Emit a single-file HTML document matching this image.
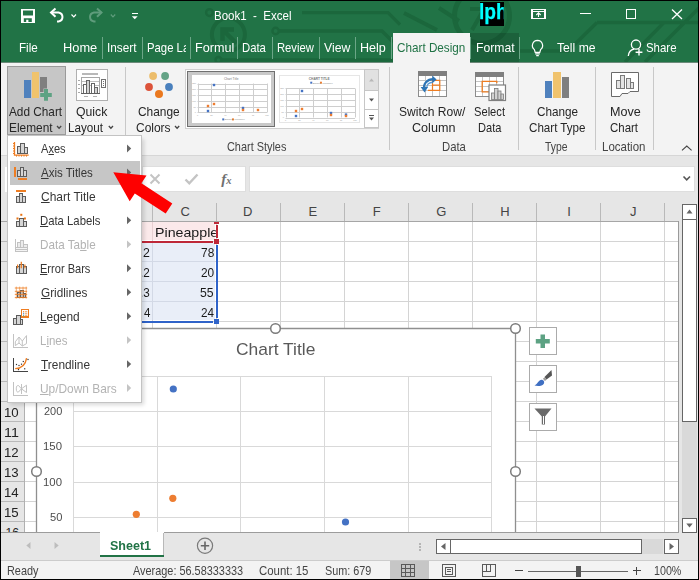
<!DOCTYPE html>
<html lang="en"><head><meta charset="utf-8"><title>Book1 - Excel</title>
<style>
html,body{margin:0;padding:0;background:#000;overflow:hidden}
#app{position:relative;width:699px;height:580px;overflow:hidden;background:#000;font-family:"Liberation Sans", sans-serif}
.t{position:absolute;white-space:pre;line-height:20px;transform-origin:0 0;font-family:"Liberation Sans", sans-serif;}
.t u{text-decoration:underline;text-underline-offset:1px;text-decoration-thickness:1px}
svg{position:absolute;left:0;top:0}
svg text{font-family:"Liberation Sans",sans-serif}
</style></head><body>
<div id="app">
<svg width="699" height="580" viewBox="0 0 699 580">
<rect x="1" y="1" width="697" height="61.6" fill="#217346" />
<clipPath id="tclip"><rect x="1" y="1" width="697" height="61"/></clipPath><g clip-path="url(#tclip)" fill="none" stroke="#1b673c" stroke-width="3.6" stroke-linecap="butt"><circle cx="228.4" cy="34.5" r="16.5" stroke-width="4"/><path d="M236.5 43.5 L224 31 M222.5 41 V29.5 H234" stroke-width="4.4"/><circle cx="209.5" cy="12.6" r="3.4" stroke-width="2.4"/><circle cx="275.6" cy="31" r="3.2" stroke-width="2.4"/><path d="M279 31 H382 L393 42 M302 12.6 H388 L400 24.6" stroke-width="3.4"/><circle cx="218.5" cy="60" r="3" stroke-width="2.4"/><path d="M222 60 H400" stroke-width="3.4"/><circle cx="482" cy="16" r="27.5" stroke-width="5"/><path d="M470 9 H484 L472 30 M404 13 L437 30 M439 8 L459 21" stroke-width="4"/><path d="M597 22.5 H699 M597 22.5 L568 51 H520 M664 22.5 L625 62 M699 8 L645 62" stroke-width="3.4"/></g>
<path d="M21 9 H35 V23 H21 Z M23 10.4 V15.6 H33 V10.4 Z M23.8 18.2 V22 H26.2 V19.8 H28.4 V22 H31.8 V18.2 Z" fill="#ffffff" fill-rule="evenodd"/>
<path d="M51 12.5 H58.5 A5 4.6 0 0 1 58.5 21.5 H57" fill="none" stroke="#ffffff" stroke-width="2" stroke-linecap="butt"/>
<path d="M55.5 8.5 L51 12.5 L55.5 16.8" fill="none" stroke="#ffffff" stroke-width="2" stroke-linejoin="miter"/>
<path d="M71.5 14.5 L73.8 16.8 L76 14.5" fill="none" stroke="#ffffff" stroke-width="1.2" />
<path d="M101.5 12.5 H94 A5 4.6 0 0 0 94 21.5 H95.5" fill="none" stroke="#5f9c7c" stroke-width="2" />
<path d="M97 8.5 L101.5 12.5 L97 16.8" fill="none" stroke="#5f9c7c" stroke-width="2" />
<path d="M110.8 14.5 L113 16.8 L115.2 14.5" fill="none" stroke="#5f9c7c" stroke-width="1.2" />
<rect x="132" y="13" width="5.5" height="1.3" fill="#ffffff" shape-rendering="crispEdges"/>
<path d="M131.8 16.2 H137.7 L134.75 19.2 Z" fill="#ffffff" />
<rect x="480" y="2" width="24" height="24" fill="#000" shape-rendering="crispEdges"/>
<path d="M532 9.5 H545 V18.5 H532 Z M532 11.5 H545" fill="none" stroke="#ffffff" stroke-width="1.1" shape-rendering="crispEdges"/>
<path d="M538.5 17 V13 M536.3 15 L538.5 12.8 L540.7 15" fill="none" stroke="#ffffff" stroke-width="1.1" />
<line x1="579.5" y1="13.5" x2="590.5" y2="13.5" stroke="#ffffff" stroke-width="1.2" shape-rendering="crispEdges"/>
<rect x="626.5" y="9.5" width="9" height="9" fill="none" stroke="#ffffff" stroke-width="1" shape-rendering="crispEdges"/>
<path d="M672 9.5 L682 19 M682 9.5 L672 19" fill="none" stroke="#ffffff" stroke-width="1.3" />
<line x1="102.5" y1="37" x2="102.5" y2="59" stroke="#6ba687" stroke-width="1" shape-rendering="crispEdges"/>
<line x1="142.5" y1="37" x2="142.5" y2="59" stroke="#6ba687" stroke-width="1" shape-rendering="crispEdges"/>
<line x1="190.5" y1="37" x2="190.5" y2="59" stroke="#6ba687" stroke-width="1" shape-rendering="crispEdges"/>
<line x1="237.5" y1="37" x2="237.5" y2="59" stroke="#6ba687" stroke-width="1" shape-rendering="crispEdges"/>
<line x1="272.5" y1="37" x2="272.5" y2="59" stroke="#6ba687" stroke-width="1" shape-rendering="crispEdges"/>
<line x1="319.5" y1="37" x2="319.5" y2="59" stroke="#6ba687" stroke-width="1" shape-rendering="crispEdges"/>
<line x1="355.5" y1="37" x2="355.5" y2="59" stroke="#6ba687" stroke-width="1" shape-rendering="crispEdges"/>
<line x1="391.5" y1="37" x2="391.5" y2="59" stroke="#6ba687" stroke-width="1" shape-rendering="crispEdges"/>
<line x1="519.5" y1="37" x2="519.5" y2="59" stroke="#6ba687" stroke-width="1" shape-rendering="crispEdges"/>
<rect x="393" y="33" width="77" height="30" fill="#f3f3f3" shape-rendering="crispEdges"/>
<rect x="470" y="33" width="49" height="29.6" fill="#000" opacity="0.15"/>
<line x1="470.5" y1="37" x2="470.5" y2="59" stroke="#6ba687" stroke-width="1" shape-rendering="crispEdges"/>
<path d="M537.5 40.3 A5.2 5.2 0 0 1 540.6 49.6 L539.8 52.4 H535.2 L534.4 49.6 A5.2 5.2 0 0 1 537.5 40.3 Z M535.2 53.9 H539.8 M536.2 55.7 H538.8" fill="none" stroke="#ffffff" stroke-width="1.2" />
<circle cx="636" cy="44.6" r="4.6" fill="none" stroke="#ffffff" stroke-width="1.3" />
<path d="M628.3 56 C628.8 51.5 631.5 49.6 634 49.2" fill="none" stroke="#ffffff" stroke-width="1.3" />
<path d="M639 48.8 V55.6 M635.6 52.2 H642.4" fill="none" stroke="#ffffff" stroke-width="1.4" />
<rect x="1" y="62.6" width="697" height="92.4" fill="#f3f3f3" />
<rect x="1" y="155" width="697" height="1" fill="#d6d6d6" shape-rendering="crispEdges"/>
<rect x="7.5" y="66.5" width="58" height="68" fill="#c6c6c6" stroke="#9a9a9a" stroke-width="1" shape-rendering="crispEdges"/>
<rect x="24" y="80" width="7" height="18" fill="#4f81bd" shape-rendering="crispEdges"/>
<rect x="32" y="72" width="7" height="26" fill="#f0c36d" shape-rendering="crispEdges"/>
<rect x="40" y="77" width="7" height="15" fill="#7f7f7f" shape-rendering="crispEdges"/>
<path d="M43.5 88.5 H48.5 V92.5 H52.3 V97.5 H48.5 V101.3 H43.5 V97.5 H39.7 V92.5 H43.5 Z" fill="#c6c6c6" />
<path d="M44 89 H48 V93 H51.8 V97 H48 V100.8 H44 V97 H40.2 V93 H44 Z" fill="#5da283" />
<path d="M57 126 L59.1 128.2 L61.2 126" fill="none" stroke="#444" stroke-width="1.3" />
<rect x="76.5" y="69.5" width="31" height="31" fill="#fff" stroke="#b0b0b0" stroke-width="1" shape-rendering="crispEdges"/>
<rect x="82" y="73" width="16" height="2" fill="#b8b8b8" shape-rendering="crispEdges"/>
<rect x="81.5" y="77.5" width="18" height="16" fill="#fff" stroke="#a8a8a8" stroke-width="1" shape-rendering="crispEdges"/>
<line x1="82" y1="81.5" x2="99" y2="81.5" stroke="#c0c0c0" stroke-width="1" shape-rendering="crispEdges"/>
<line x1="82" y1="85.5" x2="99" y2="85.5" stroke="#c0c0c0" stroke-width="1" shape-rendering="crispEdges"/>
<line x1="78" y1="80.5" x2="80" y2="80.5" stroke="#a8a8a8" stroke-width="1" shape-rendering="crispEdges"/>
<line x1="78" y1="84.5" x2="80" y2="84.5" stroke="#a8a8a8" stroke-width="1" shape-rendering="crispEdges"/>
<line x1="78" y1="88.5" x2="80" y2="88.5" stroke="#a8a8a8" stroke-width="1" shape-rendering="crispEdges"/>
<line x1="78" y1="92.5" x2="80" y2="92.5" stroke="#a8a8a8" stroke-width="1" shape-rendering="crispEdges"/>
<rect x="83.5" y="84.5" width="3" height="9.0" fill="#fff" stroke="#666" stroke-width="1" shape-rendering="crispEdges"/>
<rect x="86.5" y="80.5" width="3" height="13.0" fill="#d4d4d4" stroke="#666" stroke-width="1" shape-rendering="crispEdges"/>
<rect x="91.5" y="83.5" width="3" height="10.0" fill="#fff" stroke="#666" stroke-width="1" shape-rendering="crispEdges"/>
<rect x="94.5" y="87.5" width="3" height="6.0" fill="#d4d4d4" stroke="#666" stroke-width="1" shape-rendering="crispEdges"/>
<line x1="81" y1="93.5" x2="100" y2="93.5" stroke="#606060" stroke-width="1.4" shape-rendering="crispEdges"/>
<rect x="101.5" y="79.5" width="4" height="8" fill="#fff" stroke="#707070" stroke-width="1" shape-rendering="crispEdges"/>
<rect x="103" y="81.0" width="1" height="1" fill="#707070" shape-rendering="crispEdges"/>
<rect x="103" y="83.1" width="1" height="1" fill="#707070" shape-rendering="crispEdges"/>
<rect x="103" y="85.2" width="1" height="1" fill="#707070" shape-rendering="crispEdges"/>
<line x1="84" y1="96.5" x2="88" y2="96.5" stroke="#b0b0b0" stroke-width="1" shape-rendering="crispEdges"/>
<line x1="93" y1="96.5" x2="97" y2="96.5" stroke="#b0b0b0" stroke-width="1" shape-rendering="crispEdges"/>
<path d="M108.8 126 L110.9 128.2 L113 126" fill="none" stroke="#444" stroke-width="1.3" />
<line x1="125.5" y1="67" x2="125.5" y2="150" stroke="#c8c8c8" stroke-width="1" shape-rendering="crispEdges"/>
<circle cx="153.1" cy="76" r="3.9" fill="#ecbd6b" />
<circle cx="165.1" cy="76" r="3.9" fill="#64a386" />
<circle cx="149" cy="87" r="3.9" fill="#dc533a" />
<circle cx="169" cy="87" r="3.9" fill="#4a80bd" />
<circle cx="159" cy="93.9" r="4" fill="#ea781e" />
<path d="M175 126 L177.1 128.2 L179.2 126" fill="none" stroke="#444" stroke-width="1.3" />
<rect x="185.5" y="69.5" width="193" height="59" fill="#fff" stroke="#d0d0d0" stroke-width="1" shape-rendering="crispEdges"/>
<rect x="187.5" y="71.5" width="87" height="55" fill="#c9c9c9" stroke="#707070" stroke-width="1" shape-rendering="crispEdges"/>
<rect x="191.5" y="75" width="79.5" height="48" fill="#fff" shape-rendering="crispEdges"/>
<line x1="197.5" y1="84.5" x2="267" y2="84.5" stroke="#cecece" stroke-width="1" />
<line x1="197.5" y1="89.5" x2="267" y2="89.5" stroke="#cecece" stroke-width="1" />
<line x1="197.5" y1="95.5" x2="267" y2="95.5" stroke="#cecece" stroke-width="1" />
<line x1="197.5" y1="101.5" x2="267" y2="101.5" stroke="#cecece" stroke-width="1" />
<line x1="197.5" y1="107.5" x2="267" y2="107.5" stroke="#cecece" stroke-width="1" />
<line x1="197.5" y1="112.5" x2="267" y2="112.5" stroke="#cecece" stroke-width="1" />
<line x1="198.5" y1="83.5" x2="198.5" y2="112.5" stroke="#cecece" stroke-width="1" />
<line x1="211.5" y1="83.5" x2="211.5" y2="112.5" stroke="#cecece" stroke-width="1" />
<line x1="225.5" y1="83.5" x2="225.5" y2="112.5" stroke="#cecece" stroke-width="1" />
<line x1="239.5" y1="83.5" x2="239.5" y2="112.5" stroke="#cecece" stroke-width="1" />
<line x1="253.5" y1="83.5" x2="253.5" y2="112.5" stroke="#cecece" stroke-width="1" />
<line x1="267.5" y1="83.5" x2="267.5" y2="112.5" stroke="#cecece" stroke-width="1" />
<rect x="212.8" y="83.8" width="2.4" height="2.4" fill="#4472c4" />
<rect x="206.8" y="104.8" width="2.4" height="2.4" fill="#ed7d31" />
<rect x="212.8" y="102.8" width="2.4" height="2.4" fill="#ed7d31" />
<rect x="206.8" y="109.8" width="2.4" height="2.4" fill="#4472c4" />
<rect x="241.8" y="106.8" width="2.4" height="2.4" fill="#4472c4" />
<rect x="241.8" y="108.8" width="2.4" height="2.4" fill="#ed7d31" />
<rect x="256.8" y="108.8" width="2.4" height="2.4" fill="#ed7d31" />
<text x="231.25" y="80" font-size="3.2" fill="#777" text-anchor="middle">Chart Title</text>
<rect x="222.25" y="118.4" width="2" height="2" fill="#4472c4" />
<rect x="231.95" y="118.4" width="2" height="2" fill="#ed7d31" />
<text x="224.75" y="120.2" font-size="2.3" fill="#8a8a8a">Banana</text>
<text x="234.45" y="120.2" font-size="2.3" fill="#8a8a8a">Pineapple</text>
<text x="196.0" y="84.4" font-size="2.2" fill="#999" text-anchor="end">250</text>
<text x="196.0" y="90.2" font-size="2.2" fill="#999" text-anchor="end">200</text>
<text x="196.0" y="96.0" font-size="2.2" fill="#999" text-anchor="end">150</text>
<text x="196.0" y="101.8" font-size="2.2" fill="#999" text-anchor="end">100</text>
<text x="196.0" y="107.6" font-size="2.2" fill="#999" text-anchor="end">50</text>
<text x="196.0" y="113.4" font-size="2.2" fill="#999" text-anchor="end">0</text>
<text x="197.5" y="115.8" font-size="2.2" fill="#999" text-anchor="middle">0</text>
<text x="211.4" y="115.8" font-size="2.2" fill="#999" text-anchor="middle">20</text>
<text x="225.3" y="115.8" font-size="2.2" fill="#999" text-anchor="middle">40</text>
<text x="239.2" y="115.8" font-size="2.2" fill="#999" text-anchor="middle">60</text>
<text x="253.1" y="115.8" font-size="2.2" fill="#999" text-anchor="middle">80</text>
<text x="267.0" y="115.8" font-size="2.2" fill="#999" text-anchor="middle">100</text>
<rect x="279.5" y="75" width="79.5" height="47.5" fill="#fff" stroke="#e6e6e6" stroke-width="1" shape-rendering="crispEdges"/>
<line x1="285.5" y1="88.5" x2="355" y2="88.5" stroke="#cecece" stroke-width="1" />
<line x1="285.5" y1="94.5" x2="355" y2="94.5" stroke="#cecece" stroke-width="1" />
<line x1="285.5" y1="100.5" x2="355" y2="100.5" stroke="#cecece" stroke-width="1" />
<line x1="285.5" y1="106.5" x2="355" y2="106.5" stroke="#cecece" stroke-width="1" />
<line x1="285.5" y1="112.5" x2="355" y2="112.5" stroke="#cecece" stroke-width="1" />
<line x1="285.5" y1="118.5" x2="355" y2="118.5" stroke="#cecece" stroke-width="1" />
<line x1="286.5" y1="88.5" x2="286.5" y2="117.5" stroke="#cecece" stroke-width="1" />
<line x1="299.5" y1="88.5" x2="299.5" y2="117.5" stroke="#cecece" stroke-width="1" />
<line x1="313.5" y1="88.5" x2="313.5" y2="117.5" stroke="#cecece" stroke-width="1" />
<line x1="327.5" y1="88.5" x2="327.5" y2="117.5" stroke="#cecece" stroke-width="1" />
<line x1="341.5" y1="88.5" x2="341.5" y2="117.5" stroke="#cecece" stroke-width="1" />
<line x1="355.5" y1="88.5" x2="355.5" y2="117.5" stroke="#cecece" stroke-width="1" />
<rect x="300.8" y="89.8" width="2.4" height="2.4" fill="#4472c4" />
<rect x="294.8" y="109.8" width="2.4" height="2.4" fill="#ed7d31" />
<rect x="300.8" y="107.8" width="2.4" height="2.4" fill="#ed7d31" />
<rect x="294.8" y="114.8" width="2.4" height="2.4" fill="#4472c4" />
<rect x="329.8" y="111.8" width="2.4" height="2.4" fill="#4472c4" />
<rect x="329.8" y="113.8" width="2.4" height="2.4" fill="#ed7d31" />
<rect x="344.8" y="113.39999999999999" width="2.4" height="2.4" fill="#4472c4" />
<rect x="344.8" y="114.8" width="2.4" height="2.4" fill="#ed7d31" />
<text x="319.25" y="79.7" font-size="3.2" fill="#777" text-anchor="middle" font-weight="700">CHART TITLE</text>
<rect x="310.25" y="81.7" width="2" height="2" fill="#4472c4" />
<rect x="319.95" y="81.7" width="2" height="2" fill="#ed7d31" />
<text x="312.75" y="83.5" font-size="2.3" fill="#8a8a8a">Banana</text>
<text x="322.45" y="83.5" font-size="2.3" fill="#8a8a8a">Pineapple</text>
<text x="284.0" y="89.4" font-size="2.2" fill="#999" text-anchor="end">250</text>
<text x="284.0" y="95.2" font-size="2.2" fill="#999" text-anchor="end">200</text>
<text x="284.0" y="101.0" font-size="2.2" fill="#999" text-anchor="end">150</text>
<text x="284.0" y="106.8" font-size="2.2" fill="#999" text-anchor="end">100</text>
<text x="284.0" y="112.6" font-size="2.2" fill="#999" text-anchor="end">50</text>
<text x="284.0" y="118.4" font-size="2.2" fill="#999" text-anchor="end">0</text>
<text x="285.5" y="120.8" font-size="2.2" fill="#999" text-anchor="middle">0</text>
<text x="299.4" y="120.8" font-size="2.2" fill="#999" text-anchor="middle">20</text>
<text x="313.3" y="120.8" font-size="2.2" fill="#999" text-anchor="middle">40</text>
<text x="327.2" y="120.8" font-size="2.2" fill="#999" text-anchor="middle">60</text>
<text x="341.1" y="120.8" font-size="2.2" fill="#999" text-anchor="middle">80</text>
<text x="355.0" y="120.8" font-size="2.2" fill="#999" text-anchor="middle">100</text>
<rect x="364.5" y="69.5" width="14" height="58" fill="#fff" stroke="#c6c6c6" stroke-width="1" shape-rendering="crispEdges"/>
<rect x="365" y="70" width="13" height="20" fill="#e1e1e1" shape-rendering="crispEdges"/>
<line x1="364.5" y1="90.5" x2="378.5" y2="90.5" stroke="#c6c6c6" stroke-width="1" shape-rendering="crispEdges"/>
<line x1="364.5" y1="109.5" x2="378.5" y2="109.5" stroke="#c6c6c6" stroke-width="1" shape-rendering="crispEdges"/>
<path d="M369 81.5 L371.5 78.5 L374 81.5 Z" fill="#b8b8b8" />
<path d="M369 98.5 L371.5 101.5 L374 98.5 Z" fill="#555" />
<line x1="369" y1="115.5" x2="374" y2="115.5" stroke="#555" stroke-width="1" shape-rendering="crispEdges"/>
<path d="M369 117.5 L371.5 120.5 L374 117.5 Z" fill="#555" />
<line x1="389.5" y1="67" x2="389.5" y2="150" stroke="#c8c8c8" stroke-width="1" shape-rendering="crispEdges"/>
<rect x="418.5" y="71" width="28" height="25" fill="#fff" stroke="#8c8c8c" stroke-width="1" shape-rendering="crispEdges"/>
<rect x="418.5" y="71" width="28" height="4.5" fill="#7f7f7f" stroke="#7f7f7f" stroke-width="1" shape-rendering="crispEdges"/>
<line x1="419" y1="80.5" x2="446" y2="80.5" stroke="#c4c4c4" stroke-width="1" shape-rendering="crispEdges"/>
<line x1="419" y1="85.5" x2="446" y2="85.5" stroke="#c4c4c4" stroke-width="1" shape-rendering="crispEdges"/>
<line x1="419" y1="90.5" x2="446" y2="90.5" stroke="#c4c4c4" stroke-width="1" shape-rendering="crispEdges"/>
<line x1="425.5" y1="76" x2="425.5" y2="96" stroke="#c4c4c4" stroke-width="1" shape-rendering="crispEdges"/>
<line x1="432.5" y1="76" x2="432.5" y2="96" stroke="#c4c4c4" stroke-width="1" shape-rendering="crispEdges"/>
<line x1="439.5" y1="76" x2="439.5" y2="96" stroke="#c4c4c4" stroke-width="1" shape-rendering="crispEdges"/>
<path d="M432.5 80.3 H439.8 V90.3 H428 M432.5 80.3 V90.3 M432.5 85.2 H439.8" fill="none" stroke="#ee7d22" stroke-width="1.2" />
<path d="M424.2 89.5 C423 83.5 427 79.3 433.5 79.2" fill="none" stroke="#2e75b6" stroke-width="2.2" />
<path d="M426.8 88 C426.6 84.5 429 82.3 433 82.2" fill="none" stroke="#5b9bd5" stroke-width="1.4" />
<path d="M432.3 75.6 L436.6 79.4 L432.3 83.2 Z" fill="#2e75b6" />
<path d="M420.6 87 L424.6 92.6 L428 87 Z" fill="#2e75b6" />
<rect x="475.5" y="72.5" width="28" height="24" fill="#fff" stroke="#8c8c8c" stroke-width="1" shape-rendering="crispEdges"/>
<rect x="475.5" y="72.5" width="28" height="4" fill="#7f7f7f" stroke="#7f7f7f" stroke-width="1" shape-rendering="crispEdges"/>
<line x1="476" y1="81.5" x2="503" y2="81.5" stroke="#c4c4c4" stroke-width="1" shape-rendering="crispEdges"/>
<line x1="476" y1="86.5" x2="503" y2="86.5" stroke="#c4c4c4" stroke-width="1" shape-rendering="crispEdges"/>
<line x1="476" y1="91.5" x2="503" y2="91.5" stroke="#c4c4c4" stroke-width="1" shape-rendering="crispEdges"/>
<line x1="482.5" y1="77" x2="482.5" y2="96" stroke="#c4c4c4" stroke-width="1" shape-rendering="crispEdges"/>
<line x1="489.5" y1="77" x2="489.5" y2="96" stroke="#c4c4c4" stroke-width="1" shape-rendering="crispEdges"/>
<line x1="496.5" y1="77" x2="496.5" y2="96" stroke="#c4c4c4" stroke-width="1" shape-rendering="crispEdges"/>
<path d="M496.8 83.2 V81.3 H482.2 V91.8 H489.5" fill="none" stroke="#ee7d22" stroke-width="1.3" />
<rect x="489" y="85" width="16.5" height="15.5" fill="#fff" stroke="#7f7f7f" stroke-width="1.2" />
<rect x="491.5" y="93" width="3" height="6.5" fill="#d2d2d2" stroke="#7a7a7a" stroke-width="0.8" />
<rect x="494.5" y="88.5" width="3.5" height="11" fill="#d2d2d2" stroke="#7a7a7a" stroke-width="0.8" />
<rect x="498" y="91" width="3" height="8.5" fill="#d2d2d2" stroke="#7a7a7a" stroke-width="0.8" />
<rect x="501" y="94" width="2.5" height="5.5" fill="#d2d2d2" stroke="#7a7a7a" stroke-width="0.8" />
<line x1="518.5" y1="67" x2="518.5" y2="150" stroke="#c8c8c8" stroke-width="1" shape-rendering="crispEdges"/>
<rect x="545" y="80.5" width="7" height="17" fill="#4f81bd" shape-rendering="crispEdges"/>
<rect x="553" y="72" width="7.5" height="25.5" fill="#f0c36d" shape-rendering="crispEdges"/>
<rect x="561.5" y="77" width="7" height="20.5" fill="#7f7f7f" shape-rendering="crispEdges"/>
<line x1="595.5" y1="67" x2="595.5" y2="150" stroke="#c8c8c8" stroke-width="1" shape-rendering="crispEdges"/>
<path d="M611.5 72.5 H638.5 V91.5 H630 L628 93.5 H622 L620 96.5 H611.5 Z" fill="#fff" stroke="#6a6a6a" stroke-width="1" />
<rect x="616.5" y="80.5" width="4" height="8" fill="#e4e4e4" stroke="#7a7a7a" stroke-width="1" shape-rendering="crispEdges"/>
<rect x="620.5" y="75.5" width="4" height="13" fill="#e4e4e4" stroke="#7a7a7a" stroke-width="1" shape-rendering="crispEdges"/>
<rect x="626.5" y="78.5" width="4" height="10" fill="#e4e4e4" stroke="#7a7a7a" stroke-width="1" shape-rendering="crispEdges"/>
<rect x="630.5" y="82.5" width="3" height="6" fill="#e4e4e4" stroke="#7a7a7a" stroke-width="1" shape-rendering="crispEdges"/>
<line x1="653.5" y1="67" x2="653.5" y2="150" stroke="#c8c8c8" stroke-width="1" shape-rendering="crispEdges"/>
<path d="M682 150.3 L686.8 146 L691.6 150.3" fill="none" stroke="#444" stroke-width="1.1" />
<rect x="1" y="156" width="697" height="45" fill="#e6e6e6" shape-rendering="crispEdges"/>
<rect x="5" y="166.5" width="130" height="25" fill="#fff" shape-rendering="crispEdges"/>
<rect x="142.5" y="166.5" width="103" height="25" fill="#fff" stroke="#dedede" stroke-width="1" shape-rendering="crispEdges"/>
<rect x="249.5" y="166.5" width="445" height="25" fill="#fff" stroke="#dedede" stroke-width="1" shape-rendering="crispEdges"/>
<path d="M150.5 174.5 L159.5 183.5 M159.5 174.5 L150.5 183.5" fill="none" stroke="#c4c4c4" stroke-width="2" />
<path d="M185.5 179.5 L189.3 183.3 L197.5 174.5" fill="none" stroke="#c4c4c4" stroke-width="2.4" />
<text x="221.3" y="184" style="font-family:Liberation Serif,serif" font-style="italic" font-size="15" font-weight="700" fill="#707070">f</text>
<text x="226.3" y="184.3" style="font-family:Liberation Serif,serif" font-style="italic" font-size="10.5" font-weight="700" fill="#707070">x</text>
<path d="M683.5 176.5 L686.7 179.8 L690 176.5" fill="none" stroke="#555" stroke-width="1.6" />
<rect x="1" y="201" width="678" height="20" fill="#e6e6e6" shape-rendering="crispEdges"/>
<line x1="152.5" y1="203" x2="152.5" y2="221" stroke="#b9b9b9" stroke-width="1" shape-rendering="crispEdges"/>
<line x1="216.5" y1="203" x2="216.5" y2="221" stroke="#b9b9b9" stroke-width="1" shape-rendering="crispEdges"/>
<line x1="280.5" y1="203" x2="280.5" y2="221" stroke="#b9b9b9" stroke-width="1" shape-rendering="crispEdges"/>
<line x1="344.5" y1="203" x2="344.5" y2="221" stroke="#b9b9b9" stroke-width="1" shape-rendering="crispEdges"/>
<line x1="408.5" y1="203" x2="408.5" y2="221" stroke="#b9b9b9" stroke-width="1" shape-rendering="crispEdges"/>
<line x1="472.5" y1="203" x2="472.5" y2="221" stroke="#b9b9b9" stroke-width="1" shape-rendering="crispEdges"/>
<line x1="536.5" y1="203" x2="536.5" y2="221" stroke="#b9b9b9" stroke-width="1" shape-rendering="crispEdges"/>
<line x1="600.5" y1="203" x2="600.5" y2="221" stroke="#b9b9b9" stroke-width="1" shape-rendering="crispEdges"/>
<line x1="664.5" y1="203" x2="664.5" y2="221" stroke="#b9b9b9" stroke-width="1" shape-rendering="crispEdges"/>
<rect x="1" y="221" width="678" height="1" fill="#a6a6a6" shape-rendering="crispEdges"/>
<rect x="25" y="222" width="654" height="310" fill="#fff" shape-rendering="crispEdges"/>
<line x1="25" y1="241.5" x2="679" y2="241.5" stroke="#d4d4d4" stroke-width="1" shape-rendering="crispEdges"/>
<line x1="25" y1="261.5" x2="679" y2="261.5" stroke="#d4d4d4" stroke-width="1" shape-rendering="crispEdges"/>
<line x1="25" y1="281.5" x2="679" y2="281.5" stroke="#d4d4d4" stroke-width="1" shape-rendering="crispEdges"/>
<line x1="25" y1="301.5" x2="679" y2="301.5" stroke="#d4d4d4" stroke-width="1" shape-rendering="crispEdges"/>
<line x1="25" y1="321.5" x2="679" y2="321.5" stroke="#d4d4d4" stroke-width="1" shape-rendering="crispEdges"/>
<line x1="25" y1="341.5" x2="679" y2="341.5" stroke="#d4d4d4" stroke-width="1" shape-rendering="crispEdges"/>
<line x1="25" y1="361.5" x2="679" y2="361.5" stroke="#d4d4d4" stroke-width="1" shape-rendering="crispEdges"/>
<line x1="25" y1="381.5" x2="679" y2="381.5" stroke="#d4d4d4" stroke-width="1" shape-rendering="crispEdges"/>
<line x1="25" y1="401.5" x2="679" y2="401.5" stroke="#d4d4d4" stroke-width="1" shape-rendering="crispEdges"/>
<line x1="25" y1="421.5" x2="679" y2="421.5" stroke="#d4d4d4" stroke-width="1" shape-rendering="crispEdges"/>
<line x1="25" y1="441.5" x2="679" y2="441.5" stroke="#d4d4d4" stroke-width="1" shape-rendering="crispEdges"/>
<line x1="25" y1="461.5" x2="679" y2="461.5" stroke="#d4d4d4" stroke-width="1" shape-rendering="crispEdges"/>
<line x1="25" y1="481.5" x2="679" y2="481.5" stroke="#d4d4d4" stroke-width="1" shape-rendering="crispEdges"/>
<line x1="25" y1="501.5" x2="679" y2="501.5" stroke="#d4d4d4" stroke-width="1" shape-rendering="crispEdges"/>
<line x1="25" y1="521.5" x2="679" y2="521.5" stroke="#d4d4d4" stroke-width="1" shape-rendering="crispEdges"/>
<line x1="152.5" y1="222" x2="152.5" y2="532" stroke="#d4d4d4" stroke-width="1" shape-rendering="crispEdges"/>
<line x1="216.5" y1="222" x2="216.5" y2="532" stroke="#d4d4d4" stroke-width="1" shape-rendering="crispEdges"/>
<line x1="280.5" y1="222" x2="280.5" y2="532" stroke="#d4d4d4" stroke-width="1" shape-rendering="crispEdges"/>
<line x1="344.5" y1="222" x2="344.5" y2="532" stroke="#d4d4d4" stroke-width="1" shape-rendering="crispEdges"/>
<line x1="408.5" y1="222" x2="408.5" y2="532" stroke="#d4d4d4" stroke-width="1" shape-rendering="crispEdges"/>
<line x1="472.5" y1="222" x2="472.5" y2="532" stroke="#d4d4d4" stroke-width="1" shape-rendering="crispEdges"/>
<line x1="536.5" y1="222" x2="536.5" y2="532" stroke="#d4d4d4" stroke-width="1" shape-rendering="crispEdges"/>
<line x1="600.5" y1="222" x2="600.5" y2="532" stroke="#d4d4d4" stroke-width="1" shape-rendering="crispEdges"/>
<line x1="664.5" y1="222" x2="664.5" y2="532" stroke="#d4d4d4" stroke-width="1" shape-rendering="crispEdges"/>
<line x1="678.5" y1="221" x2="678.5" y2="532" stroke="#9a9a9a" stroke-width="1" shape-rendering="crispEdges"/>
<rect x="1" y="222" width="24" height="310" fill="#e6e6e6" shape-rendering="crispEdges"/>
<line x1="24.5" y1="222" x2="24.5" y2="532" stroke="#b0b0b0" stroke-width="1" shape-rendering="crispEdges"/>
<line x1="1" y1="241.5" x2="24" y2="241.5" stroke="#b9b9b9" stroke-width="1" shape-rendering="crispEdges"/>
<line x1="1" y1="261.5" x2="24" y2="261.5" stroke="#b9b9b9" stroke-width="1" shape-rendering="crispEdges"/>
<line x1="1" y1="281.5" x2="24" y2="281.5" stroke="#b9b9b9" stroke-width="1" shape-rendering="crispEdges"/>
<line x1="1" y1="301.5" x2="24" y2="301.5" stroke="#b9b9b9" stroke-width="1" shape-rendering="crispEdges"/>
<line x1="1" y1="321.5" x2="24" y2="321.5" stroke="#b9b9b9" stroke-width="1" shape-rendering="crispEdges"/>
<line x1="1" y1="341.5" x2="24" y2="341.5" stroke="#b9b9b9" stroke-width="1" shape-rendering="crispEdges"/>
<line x1="1" y1="361.5" x2="24" y2="361.5" stroke="#b9b9b9" stroke-width="1" shape-rendering="crispEdges"/>
<line x1="1" y1="381.5" x2="24" y2="381.5" stroke="#b9b9b9" stroke-width="1" shape-rendering="crispEdges"/>
<line x1="1" y1="401.5" x2="24" y2="401.5" stroke="#b9b9b9" stroke-width="1" shape-rendering="crispEdges"/>
<line x1="1" y1="421.5" x2="24" y2="421.5" stroke="#b9b9b9" stroke-width="1" shape-rendering="crispEdges"/>
<line x1="1" y1="441.5" x2="24" y2="441.5" stroke="#b9b9b9" stroke-width="1" shape-rendering="crispEdges"/>
<line x1="1" y1="461.5" x2="24" y2="461.5" stroke="#b9b9b9" stroke-width="1" shape-rendering="crispEdges"/>
<line x1="1" y1="481.5" x2="24" y2="481.5" stroke="#b9b9b9" stroke-width="1" shape-rendering="crispEdges"/>
<line x1="1" y1="501.5" x2="24" y2="501.5" stroke="#b9b9b9" stroke-width="1" shape-rendering="crispEdges"/>
<line x1="1" y1="521.5" x2="24" y2="521.5" stroke="#b9b9b9" stroke-width="1" shape-rendering="crispEdges"/>
<clipPath id="r16"><rect x="0" y="522" width="30" height="10"/></clipPath>
<text clip-path="url(#r16)" x="5.5" y="537" font-size="13" fill="#222" textLength="13.5" lengthAdjust="spacingAndGlyphs">16</text>
<rect x="142" y="222" width="73" height="18" fill="#fbe9ea" shape-rendering="crispEdges"/>
<rect x="142" y="243" width="73" height="77" fill="#e9eef8" shape-rendering="crispEdges"/>
<line x1="142" y1="261.5" x2="215" y2="261.5" stroke="#d3d9e6" stroke-width="1" shape-rendering="crispEdges"/>
<line x1="142" y1="281.5" x2="215" y2="281.5" stroke="#d3d9e6" stroke-width="1" shape-rendering="crispEdges"/>
<line x1="142" y1="301.5" x2="215" y2="301.5" stroke="#d3d9e6" stroke-width="1" shape-rendering="crispEdges"/>
<line x1="152.5" y1="222" x2="152.5" y2="240" stroke="#e8cfd1" stroke-width="1" shape-rendering="crispEdges"/>
<line x1="152.5" y1="243" x2="152.5" y2="320" stroke="#d3d9e6" stroke-width="1" shape-rendering="crispEdges"/>
<rect x="142" y="241" width="71" height="2" fill="#be2838" shape-rendering="crispEdges"/>
<rect x="216" y="225" width="2" height="13" fill="#be2838" shape-rendering="crispEdges"/>
<rect x="214" y="222" width="5" height="2" fill="#be2838" shape-rendering="crispEdges"/>
<rect x="214" y="239" width="5" height="5" fill="#be2838" shape-rendering="crispEdges"/>
<rect x="216" y="245" width="2" height="73" fill="#2f63c9" shape-rendering="crispEdges"/>
<rect x="142" y="321" width="71" height="2" fill="#2f63c9" shape-rendering="crispEdges"/>
<rect x="214" y="319" width="5" height="5" fill="#2f63c9" shape-rendering="crispEdges"/>
<rect x="37" y="328.5" width="478.5" height="210" fill="#fff" shape-rendering="crispEdges"/>
<line x1="73" y1="376.5" x2="492" y2="376.5" stroke="#d9d9d9" stroke-width="1" shape-rendering="crispEdges"/>
<line x1="73" y1="411.5" x2="492" y2="411.5" stroke="#d9d9d9" stroke-width="1" shape-rendering="crispEdges"/>
<line x1="73" y1="446.5" x2="492" y2="446.5" stroke="#d9d9d9" stroke-width="1" shape-rendering="crispEdges"/>
<line x1="73" y1="482.5" x2="492" y2="482.5" stroke="#d9d9d9" stroke-width="1" shape-rendering="crispEdges"/>
<line x1="73" y1="517.5" x2="492" y2="517.5" stroke="#d9d9d9" stroke-width="1" shape-rendering="crispEdges"/>
<line x1="73.5" y1="376" x2="73.5" y2="532" stroke="#d9d9d9" stroke-width="1" shape-rendering="crispEdges"/>
<line x1="157.5" y1="376" x2="157.5" y2="532" stroke="#d9d9d9" stroke-width="1" shape-rendering="crispEdges"/>
<line x1="240.5" y1="376" x2="240.5" y2="532" stroke="#d9d9d9" stroke-width="1" shape-rendering="crispEdges"/>
<line x1="324.5" y1="376" x2="324.5" y2="532" stroke="#d9d9d9" stroke-width="1" shape-rendering="crispEdges"/>
<line x1="408.5" y1="376" x2="408.5" y2="532" stroke="#d9d9d9" stroke-width="1" shape-rendering="crispEdges"/>
<line x1="491.5" y1="376" x2="491.5" y2="532" stroke="#d9d9d9" stroke-width="1" shape-rendering="crispEdges"/>
<line x1="36.5" y1="328" x2="36.5" y2="532" stroke="#8f8f8f" stroke-width="1.3" />
<line x1="515.5" y1="328" x2="515.5" y2="532" stroke="#8f8f8f" stroke-width="1.3" />
<line x1="37" y1="328.5" x2="516" y2="328.5" stroke="#8f8f8f" stroke-width="1.3" />
<circle cx="173.3" cy="389" r="3.6" fill="#4472c4" />
<circle cx="345.5" cy="522" r="3.6" fill="#4472c4" />
<circle cx="136.3" cy="514.3" r="3.6" fill="#ed7d31" />
<circle cx="172.8" cy="498.3" r="3.6" fill="#ed7d31" />
<circle cx="275.5" cy="328.5" r="4.8" fill="#fff" stroke="#7b7b7b" stroke-width="1.5" />
<circle cx="515.5" cy="328.5" r="4.8" fill="#fff" stroke="#7b7b7b" stroke-width="1.5" />
<circle cx="36.5" cy="471.5" r="4.8" fill="#fff" stroke="#7b7b7b" stroke-width="1.5" />
<circle cx="515.5" cy="471.5" r="4.8" fill="#fff" stroke="#7b7b7b" stroke-width="1.5" />
<rect x="529.5" y="327.5" width="27" height="27" fill="#fff" stroke="#ababab" stroke-width="1" shape-rendering="crispEdges"/>
<rect x="529.5" y="365.5" width="27" height="27" fill="#fff" stroke="#ababab" stroke-width="1" shape-rendering="crispEdges"/>
<rect x="529.5" y="403.5" width="27" height="27" fill="#fff" stroke="#ababab" stroke-width="1" shape-rendering="crispEdges"/>
<path d="M540.5 334.5 H545 V339 H549.8 V343.5 H545 V348 H540.5 V343.5 H535.8 V339 H540.5 Z" fill="#5da283" />
<path d="M551.5 370 L552 375.5 L546.5 379.5 L544.5 377 Z" fill="#555" />
<path d="M543.8 378 L545.8 380.2" fill="none" stroke="#9a9a9a" stroke-width="2.4" />
<path d="M534.5 385.5 C538 384 538.5 379.5 542 379.8 C545 380.5 545 384.5 541.5 385.5 C539 386.3 536.5 386 534.5 385.5 Z" fill="#3f6fc2" />
<path d="M534.5 408.5 H551.5 L545 416.5 V424.5 H541.8 V416.5 Z" fill="#6a6a6a" />
<rect x="542.7" y="416" width="1.3" height="7.5" fill="#fff" shape-rendering="crispEdges"/>
<rect x="1" y="532" width="697" height="28" fill="#e6e6e6" shape-rendering="crispEdges"/>
<rect x="1" y="532" width="678" height="1" fill="#9c9c9c" shape-rendering="crispEdges"/>
<rect x="99.5" y="532" width="64.5" height="23.5" fill="#fff" shape-rendering="crispEdges"/>
<rect x="99.5" y="555" width="64.5" height="2" fill="#217346" shape-rendering="crispEdges"/>
<line x1="163.5" y1="533" x2="163.5" y2="555" stroke="#b8b8b8" stroke-width="1" shape-rendering="crispEdges"/>
<path d="M30.5 542 V549 L26.3 545.5 Z" fill="#bdbdbd" />
<path d="M54.5 542 V549 L58.7 545.5 Z" fill="#bdbdbd" />
<circle cx="205" cy="545.7" r="7.6" fill="none" stroke="#7a7a7a" stroke-width="1.2" />
<path d="M205 541.5 V550 M200.8 545.7 H209.2" fill="none" stroke="#666" stroke-width="1.6" />
<rect x="419.3" y="543" width="1.6" height="1.6" fill="#b5b5b5" shape-rendering="crispEdges"/>
<rect x="419.3" y="546" width="1.6" height="1.6" fill="#b5b5b5" shape-rendering="crispEdges"/>
<rect x="419.3" y="549" width="1.6" height="1.6" fill="#b5b5b5" shape-rendering="crispEdges"/>
<rect x="450.5" y="539" width="212.5" height="15" fill="#d9d9d9" shape-rendering="crispEdges"/>
<rect x="436.5" y="539.5" width="14" height="14" fill="#fff" stroke="#666666" stroke-width="1" shape-rendering="crispEdges"/>
<path d="M445.5 543 V550 L441 546.5 Z" fill="#666" />
<rect x="450.5" y="539.5" width="191" height="14" fill="#fff" stroke="#666666" stroke-width="1" shape-rendering="crispEdges"/>
<rect x="664.5" y="539.5" width="14" height="14" fill="#fff" stroke="#666666" stroke-width="1" shape-rendering="crispEdges"/>
<path d="M669.5 543 V550 L674 546.5 Z" fill="#666" />
<rect x="679" y="201" width="19" height="331" fill="#e6e6e6" shape-rendering="crispEdges"/>
<rect x="682" y="219" width="15" height="300" fill="#d9d9d9" shape-rendering="crispEdges"/>
<rect x="682.5" y="204.5" width="14" height="14.5" fill="#fff" stroke="#666666" stroke-width="1" shape-rendering="crispEdges"/>
<path d="M686.5 213.5 L689.5 209.5 L692.5 213.5 Z" fill="#666" />
<rect x="682.5" y="219.5" width="14" height="201.5" fill="#fff" stroke="#666666" stroke-width="1" shape-rendering="crispEdges"/>
<rect x="682.5" y="518.5" width="14" height="14" fill="#fff" stroke="#666666" stroke-width="1" shape-rendering="crispEdges"/>
<path d="M686.3 523.5 L689.5 527.5 L692.7 523.5 Z" fill="#666" />
<rect x="1" y="560" width="697" height="19" fill="#f3f3f3" shape-rendering="crispEdges"/>
<rect x="1" y="560" width="697" height="1" fill="#cccccc" shape-rendering="crispEdges"/>
<rect x="389.5" y="561" width="39.5" height="18" fill="#c6c6c6" shape-rendering="crispEdges"/>
<rect x="401.5" y="564.5" width="13" height="12" fill="none" stroke="#5a5a5a" stroke-width="1" shape-rendering="crispEdges"/>
<line x1="405.5" y1="564.5" x2="405.5" y2="576.5" stroke="#5a5a5a" stroke-width="1" shape-rendering="crispEdges"/>
<line x1="410.5" y1="564.5" x2="410.5" y2="576.5" stroke="#5a5a5a" stroke-width="1" shape-rendering="crispEdges"/>
<line x1="401.5" y1="568.5" x2="414.5" y2="568.5" stroke="#5a5a5a" stroke-width="1" shape-rendering="crispEdges"/>
<line x1="401.5" y1="572.5" x2="414.5" y2="572.5" stroke="#5a5a5a" stroke-width="1" shape-rendering="crispEdges"/>
<rect x="442.5" y="564.5" width="13" height="12" fill="none" stroke="#5a5a5a" stroke-width="1" shape-rendering="crispEdges"/>
<rect x="445.5" y="567.5" width="7" height="7" fill="none" stroke="#5a5a5a" stroke-width="1" shape-rendering="crispEdges"/>
<line x1="447" y1="569.5" x2="451" y2="569.5" stroke="#5a5a5a" stroke-width="1" shape-rendering="crispEdges"/>
<line x1="447" y1="571.5" x2="451" y2="571.5" stroke="#5a5a5a" stroke-width="1" shape-rendering="crispEdges"/>
<path d="M482.5 564.5 H495.5 V576.5 H482.5 Z M486.5 564.5 V571.5 M490.5 564.5 V571.5 M482.5 571.5 H490.5" fill="none" stroke="#5a5a5a" stroke-width="1" shape-rendering="crispEdges"/>
<line x1="515" y1="570.5" x2="522.5" y2="570.5" stroke="#444" stroke-width="1" shape-rendering="crispEdges"/>
<line x1="528" y1="571.5" x2="627.5" y2="571.5" stroke="#666" stroke-width="1" shape-rendering="crispEdges"/>
<rect x="576" y="566" width="5" height="11" fill="#555" shape-rendering="crispEdges"/>
<path d="M633 570.5 H640.5 M636.5 567 V574.5" fill="none" stroke="#444" stroke-width="1" shape-rendering="crispEdges"/>
</svg>
<span class="t" style="left:213.59px;top:6.00px;font-size:13px;color:#fff;transform:scaleX(0.8871);">Book1  -  Excel</span>
<span class="t" style="left:478.90px;top:1.50px;font-size:22px;color:#00ffff;transform:scaleX(0.8717);font-weight:700;-webkit-text-stroke:0.25px #00ffff;clip-path:inset(-5px 4.6px -6px -1px);">lph</span>
<span class="t" style="left:18.58px;top:38.00px;font-size:13px;color:#fff;transform:scaleX(0.8965);">File</span>
<span class="t" style="left:63.49px;top:38.00px;font-size:13px;color:#fff;transform:scaleX(0.9855);">Home</span>
<span class="t" style="left:106.95px;top:38.00px;font-size:13px;color:#fff;transform:scaleX(0.9066);">Insert</span>
<span class="t" style="left:147.01px;top:38.00px;font-size:13px;color:#fff;transform:scaleX(0.8707);clip-path:inset(0 3.6px 0 0);">Page La</span>
<span class="t" style="left:194.51px;top:38.00px;font-size:13px;color:#fff;transform:scaleX(0.9696);">Formul</span>
<span class="t" style="left:242.11px;top:38.00px;font-size:13px;color:#fff;transform:scaleX(0.8702);">Data</span>
<span class="t" style="left:276.62px;top:38.00px;font-size:13px;color:#fff;transform:scaleX(0.8634);">Review</span>
<span class="t" style="left:324.29px;top:38.00px;font-size:13px;color:#fff;transform:scaleX(0.9395);">View</span>
<span class="t" style="left:360.01px;top:38.00px;font-size:13px;color:#fff;transform:scaleX(0.9672);">Help</span>
<span class="t" style="left:396.94px;top:38.00px;font-size:13px;color:#217346;transform:scaleX(0.9008);">Chart Design</span>
<span class="t" style="left:475.54px;top:38.00px;font-size:13px;color:#fff;transform:scaleX(0.9380);">Format</span>
<span class="t" style="left:557.29px;top:38.00px;font-size:13px;color:#fff;transform:scaleX(0.9359);">Tell me</span>
<span class="t" style="left:646.12px;top:38.00px;font-size:13px;color:#fff;transform:scaleX(0.8789);">Share</span>
<span class="t" style="left:9.33px;top:101.50px;font-size:13px;color:#262626;transform:scaleX(0.9075);">Add Chart</span>
<span class="t" style="left:8.57px;top:117.50px;font-size:13px;color:#262626;transform:scaleX(0.9126);">Element</span>
<span class="t" style="left:75.94px;top:101.50px;font-size:13px;color:#262626;transform:scaleX(0.9420);">Quick</span>
<span class="t" style="left:68.09px;top:117.50px;font-size:13px;color:#262626;transform:scaleX(0.8952);">Layout</span>
<span class="t" style="left:138.03px;top:101.70px;font-size:13px;color:#262626;transform:scaleX(0.9149);">Change</span>
<span class="t" style="left:135.93px;top:117.50px;font-size:13px;color:#262626;transform:scaleX(0.9209);">Colors</span>
<span class="t" style="left:226.98px;top:136.50px;font-size:13px;color:#444;transform:scaleX(0.8386);">Chart Styles</span>
<span class="t" style="left:399.07px;top:101.50px;font-size:13px;color:#262626;transform:scaleX(0.9275);">Switch Row/</span>
<span class="t" style="left:411.90px;top:117.50px;font-size:13px;color:#262626;transform:scaleX(0.9692);">Column</span>
<span class="t" style="left:473.64px;top:101.50px;font-size:13px;color:#262626;transform:scaleX(0.8572);">Select</span>
<span class="t" style="left:478.13px;top:117.50px;font-size:13px;color:#262626;transform:scaleX(0.8513);">Data</span>
<span class="t" style="left:441.61px;top:136.50px;font-size:13px;color:#444;transform:scaleX(0.8702);">Data</span>
<span class="t" style="left:536.94px;top:101.50px;font-size:13px;color:#262626;transform:scaleX(0.9014);">Change</span>
<span class="t" style="left:528.94px;top:117.50px;font-size:13px;color:#262626;transform:scaleX(0.8921);">Chart Type</span>
<span class="t" style="left:544.82px;top:136.50px;font-size:13px;color:#444;transform:scaleX(0.7970);">Type</span>
<span class="t" style="left:609.51px;top:101.50px;font-size:13px;color:#262626;transform:scaleX(0.9673);">Move</span>
<span class="t" style="left:610.45px;top:117.50px;font-size:13px;color:#262626;transform:scaleX(0.8811);">Chart</span>
<span class="t" style="left:602.10px;top:136.50px;font-size:13px;color:#444;transform:scaleX(0.8833);">Location</span>
<span class="t" style="left:180.41px;top:202.00px;font-size:13px;color:#444;">C</span>
<span class="t" style="left:243.03px;top:202.00px;font-size:13px;color:#444;">D</span>
<span class="t" style="left:308.49px;top:202.00px;font-size:13px;color:#444;">E</span>
<span class="t" style="left:372.69px;top:202.00px;font-size:13px;color:#444;">F</span>
<span class="t" style="left:436.19px;top:202.00px;font-size:13px;color:#444;">G</span>
<span class="t" style="left:500.24px;top:202.00px;font-size:13px;color:#444;">H</span>
<span class="t" style="left:567.13px;top:202.00px;font-size:13px;color:#444;">I</span>
<span class="t" style="left:629.93px;top:202.00px;font-size:13px;color:#444;">J</span>
<span class="t" style="left:4.48px;top:403.00px;font-size:13px;color:#222;transform:scaleX(1.0174);">10</span>
<span class="t" style="left:4.40px;top:423.00px;font-size:13px;color:#222;transform:scaleX(1.1000);">11</span>
<span class="t" style="left:4.48px;top:443.00px;font-size:13px;color:#222;transform:scaleX(1.0154);">12</span>
<span class="t" style="left:4.48px;top:463.00px;font-size:13px;color:#222;transform:scaleX(1.0181);">13</span>
<span class="t" style="left:4.48px;top:483.00px;font-size:13px;color:#222;transform:scaleX(1.0154);">14</span>
<span class="t" style="left:4.48px;top:503.00px;font-size:13px;color:#222;transform:scaleX(1.0189);">15</span>
<span class="t" style="left:154.59px;top:223.00px;font-size:13.5px;color:#1a1a1a;transform:scaleX(1.0532);clip-path:inset(0 2.3px 0 0);">Pineapple</span>
<span class="t" style="left:200.84px;top:243.20px;font-size:13.5px;color:#1a1a1a;transform:scaleX(0.8844);">78</span>
<span class="t" style="left:200.84px;top:263.20px;font-size:13.5px;color:#1a1a1a;transform:scaleX(0.8781);">20</span>
<span class="t" style="left:200.49px;top:283.20px;font-size:13.5px;color:#1a1a1a;transform:scaleX(0.9065);">55</span>
<span class="t" style="left:200.85px;top:303.20px;font-size:13.5px;color:#1a1a1a;transform:scaleX(0.8682);">24</span>
<span class="t" style="left:143.12px;top:243.20px;font-size:13.5px;color:#1a1a1a;transform:scaleX(0.9109);">2</span>
<span class="t" style="left:140.17px;top:263.20px;font-size:13.5px;color:#1a1a1a;transform:scaleX(0.8659);">.2</span>
<span class="t" style="left:140.18px;top:283.20px;font-size:13.5px;color:#1a1a1a;transform:scaleX(0.8642);">.3</span>
<span class="t" style="left:143.50px;top:303.20px;font-size:13.5px;color:#1a1a1a;transform:scaleX(0.8565);">4</span>
<span class="t" style="left:235.68px;top:339.50px;font-size:17px;color:#595959;transform:scaleX(1.0240);">Chart Title</span>
<span class="t" style="left:43.98px;top:401.00px;font-size:11px;color:#4d4d4d;transform:scaleX(0.9974);">200</span>
<span class="t" style="left:43.32px;top:436.30px;font-size:11px;color:#4d4d4d;transform:scaleX(1.0343);">150</span>
<span class="t" style="left:43.32px;top:471.60px;font-size:11px;color:#4d4d4d;transform:scaleX(1.0343);">100</span>
<span class="t" style="left:49.89px;top:506.90px;font-size:11px;color:#4d4d4d;transform:scaleX(1.0115);">50</span>
<span class="t" style="left:110.34px;top:535.50px;font-size:13px;color:#217346;transform:scaleX(0.9629);font-weight:700;">Sheet1</span>
<span class="t" style="left:6.65px;top:560.50px;font-size:13px;color:#444;transform:scaleX(0.8370);">Ready</span>
<span class="t" style="left:132.84px;top:560.50px;font-size:13px;color:#444;transform:scaleX(0.8384);">Average: 56.58333333</span>
<span class="t" style="left:258.95px;top:560.50px;font-size:13px;color:#444;transform:scaleX(0.8765);">Count: 15</span>
<span class="t" style="left:324.66px;top:560.50px;font-size:13px;color:#444;transform:scaleX(0.8334);">Sum: 679</span>
<span class="t" style="left:653.68px;top:561.00px;font-size:13px;color:#444;transform:scaleX(0.8232);">100%</span>
<svg width="699" height="580" viewBox="0 0 699 580">
<filter id="sh" x="-10%" y="-10%" width="120%" height="120%"><feGaussianBlur stdDeviation="2"/></filter><rect x="10" y="139" width="134" height="266" fill="#000" opacity="0.15" filter="url(#sh)"/>
<rect x="7.5" y="135.5" width="134" height="266.5" fill="#fff" stroke="#c3c3c3" stroke-width="1" shape-rendering="crispEdges"/>
<rect x="9.5" y="161" width="130" height="23.5" fill="#c6c6c6" shape-rendering="crispEdges"/>
<path d="M127 144.6 L131.2 148.5 L127 152.4 Z" fill="#666" />
<path d="M127 168.54999999999998 L131.2 172.45 L127 176.35 Z" fill="#666" />
<path d="M127 216.45 L131.2 220.35 L127 224.25 Z" fill="#666" />
<path d="M127 240.4 L131.2 244.3 L127 248.20000000000002 Z" fill="#c4c4c4" />
<path d="M127 264.35 L131.2 268.25 L127 272.15 Z" fill="#666" />
<path d="M127 288.3 L131.2 292.2 L127 296.09999999999997 Z" fill="#666" />
<path d="M127 312.25 L131.2 316.15 L127 320.04999999999995 Z" fill="#666" />
<path d="M127 336.20000000000005 L131.2 340.1 L127 344.0 Z" fill="#c4c4c4" />
<path d="M127 360.15 L131.2 364.04999999999995 L127 367.94999999999993 Z" fill="#666" />
<path d="M127 384.1 L131.2 388.0 L127 391.9 Z" fill="#c4c4c4" />
<path d="M14.5 142 V155.2 H28.7" fill="none" stroke="#ee7d22" stroke-width="1.3" />
<line x1="13" y1="143.5" x2="14.5" y2="143.5" stroke="#ee7d22" stroke-width="1" />
<line x1="13" y1="146" x2="14.5" y2="146" stroke="#ee7d22" stroke-width="1" />
<line x1="13" y1="148.5" x2="14.5" y2="148.5" stroke="#ee7d22" stroke-width="1" />
<line x1="13" y1="151" x2="14.5" y2="151" stroke="#ee7d22" stroke-width="1" />
<line x1="13" y1="153.5" x2="14.5" y2="153.5" stroke="#ee7d22" stroke-width="1" />
<line x1="16.5" y1="155" x2="16.5" y2="156.6" stroke="#ee7d22" stroke-width="1" />
<line x1="19" y1="155" x2="19" y2="156.6" stroke="#ee7d22" stroke-width="1" />
<line x1="21.5" y1="155" x2="21.5" y2="156.6" stroke="#ee7d22" stroke-width="1" />
<line x1="24" y1="155" x2="24" y2="156.6" stroke="#ee7d22" stroke-width="1" />
<line x1="26.5" y1="155" x2="26.5" y2="156.6" stroke="#ee7d22" stroke-width="1" />
<rect x="17.5" y="146.5" width="3" height="7" fill="#d6d6d6" stroke="#5c5c5c" stroke-width="1" shape-rendering="crispEdges"/>
<rect x="20.5" y="143.5" width="4" height="10" fill="#d6d6d6" stroke="#5c5c5c" stroke-width="1" shape-rendering="crispEdges"/>
<rect x="24.5" y="147.5" width="3" height="6" fill="#d6d6d6" stroke="#5c5c5c" stroke-width="1" shape-rendering="crispEdges"/>
<rect x="13.8" y="167" width="1.8" height="9.5" fill="#ee7d22" shape-rendering="crispEdges"/>
<rect x="17.5" y="178" width="9.2" height="1.6" fill="#ee7d22" shape-rendering="crispEdges"/>
<rect x="17.5" y="170.5" width="3" height="6" fill="#d6d6d6" stroke="#5c5c5c" stroke-width="1" shape-rendering="crispEdges"/>
<rect x="20.5" y="167.5" width="3" height="9" fill="#d6d6d6" stroke="#5c5c5c" stroke-width="1" shape-rendering="crispEdges"/>
<rect x="23.5" y="170.5" width="3" height="6" fill="#d6d6d6" stroke="#5c5c5c" stroke-width="1" shape-rendering="crispEdges"/>
<rect x="15.8" y="190.3" width="9.8" height="1.7" fill="#ee7d22" shape-rendering="crispEdges"/>
<rect x="16.5" y="196.5" width="3" height="6" fill="#d6d6d6" stroke="#5c5c5c" stroke-width="1" shape-rendering="crispEdges"/>
<rect x="19.5" y="193.5" width="3" height="9" fill="#d6d6d6" stroke="#5c5c5c" stroke-width="1" shape-rendering="crispEdges"/>
<rect x="22.5" y="196.5" width="3" height="6" fill="#d6d6d6" stroke="#5c5c5c" stroke-width="1" shape-rendering="crispEdges"/>
<rect x="16.5" y="217.5" width="2" height="2" fill="#e8700f" />
<rect x="20.3" y="213.8" width="2" height="2" fill="#e8700f" />
<rect x="23.9" y="217.5" width="2" height="2" fill="#e8700f" />
<rect x="16.5" y="221.5" width="3" height="5" fill="#d6d6d6" stroke="#5c5c5c" stroke-width="1" shape-rendering="crispEdges"/>
<rect x="19.5" y="218.0" width="4" height="8.5" fill="#d6d6d6" stroke="#5c5c5c" stroke-width="1" shape-rendering="crispEdges"/>
<rect x="23.5" y="221.0" width="3" height="5.5" fill="#d6d6d6" stroke="#5c5c5c" stroke-width="1" shape-rendering="crispEdges"/>
<line x1="15.5" y1="239" x2="15.5" y2="252" stroke="#c2c2c2" stroke-width="1" shape-rendering="crispEdges"/>
<rect x="17.5" y="242.5" width="3" height="5" fill="#ececec" stroke="#c2c2c2" stroke-width="1" shape-rendering="crispEdges"/>
<rect x="20.5" y="240.0" width="3" height="7.5" fill="#ececec" stroke="#c2c2c2" stroke-width="1" shape-rendering="crispEdges"/>
<rect x="23.5" y="244.0" width="4" height="3.5" fill="#ececec" stroke="#c2c2c2" stroke-width="1" shape-rendering="crispEdges"/>
<rect x="15.5" y="247.5" width="12" height="4" fill="#f4f4f4" stroke="#c2c2c2" stroke-width="1" shape-rendering="crispEdges"/>
<line x1="15.5" y1="249.5" x2="27.5" y2="249.5" stroke="#c2c2c2" stroke-width="1" shape-rendering="crispEdges"/>
<rect x="16.5" y="266.5" width="3" height="7" fill="#d6d6d6" stroke="#5c5c5c" stroke-width="1" shape-rendering="crispEdges"/>
<rect x="19.5" y="264.5" width="4" height="9" fill="#d6d6d6" stroke="#5c5c5c" stroke-width="1" shape-rendering="crispEdges"/>
<rect x="23.5" y="266.5" width="3" height="7" fill="#d6d6d6" stroke="#5c5c5c" stroke-width="1" shape-rendering="crispEdges"/>
<line x1="21.3" y1="261.8" x2="21.3" y2="268.2" stroke="#ee7d22" stroke-width="1.3" />
<line x1="17.6" y1="264.5" x2="17.6" y2="268.2" stroke="#ee7d22" stroke-width="1.2" />
<line x1="24.9" y1="264.5" x2="24.9" y2="268.2" stroke="#ee7d22" stroke-width="1.2" />
<rect x="17.5" y="292.5" width="3" height="5" fill="#bdbdbd" stroke="#5c5c5c" stroke-width="1" shape-rendering="crispEdges"/>
<rect x="20.5" y="290.5" width="3" height="7" fill="#bdbdbd" stroke="#5c5c5c" stroke-width="1" shape-rendering="crispEdges"/>
<rect x="23.5" y="293.5" width="2" height="4" fill="#bdbdbd" stroke="#5c5c5c" stroke-width="1" shape-rendering="crispEdges"/>
<line x1="14.8" y1="288" x2="27.2" y2="288" stroke="#ee7d22" stroke-width="1" opacity=".85"/>
<line x1="14.8" y1="291.3" x2="27.2" y2="291.3" stroke="#ee7d22" stroke-width="1" opacity=".85"/>
<line x1="14.8" y1="294.4" x2="27.2" y2="294.4" stroke="#ee7d22" stroke-width="1" opacity=".85"/>
<line x1="14.8" y1="297.6" x2="27.2" y2="297.6" stroke="#ee7d22" stroke-width="1" opacity=".85"/>
<line x1="16.3" y1="286.6" x2="16.3" y2="298.6" stroke="#ee7d22" stroke-width="1" opacity=".6"/>
<line x1="19.7" y1="286.6" x2="19.7" y2="298.6" stroke="#ee7d22" stroke-width="1" opacity=".6"/>
<line x1="23" y1="286.6" x2="23" y2="298.6" stroke="#ee7d22" stroke-width="1" opacity=".6"/>
<line x1="26.2" y1="286.6" x2="26.2" y2="298.6" stroke="#ee7d22" stroke-width="1" opacity=".6"/>
<rect x="13.5" y="318.5" width="3" height="6" fill="#d6d6d6" stroke="#5c5c5c" stroke-width="1" shape-rendering="crispEdges"/>
<rect x="16.5" y="315.5" width="4" height="9" fill="#d6d6d6" stroke="#5c5c5c" stroke-width="1" shape-rendering="crispEdges"/>
<rect x="20.5" y="319.5" width="2" height="5" fill="#d6d6d6" stroke="#5c5c5c" stroke-width="1" shape-rendering="crispEdges"/>
<rect x="21.5" y="309.5" width="7" height="7.5" fill="#fff" stroke="#ee7d22" stroke-width="1.2" shape-rendering="crispEdges"/>
<rect x="23" y="311.2" width="1.2" height="1.2" fill="#ee7d22" />
<line x1="25" y1="311.8" x2="27.3" y2="311.8" stroke="#ee7d22" stroke-width="0.8" />
<rect x="23" y="313.2" width="1.2" height="1.2" fill="#4f81bd" />
<line x1="25" y1="313.8" x2="27.3" y2="313.8" stroke="#ee7d22" stroke-width="0.8" />
<rect x="23" y="315.2" width="1.2" height="1.2" fill="#5da283" />
<line x1="25" y1="315.8" x2="27.3" y2="315.8" stroke="#ee7d22" stroke-width="0.8" />
<path d="M13.5 334 V347.5 H28" fill="none" stroke="#c2c2c2" stroke-width="1" shape-rendering="crispEdges"/>
<path d="M15.3 341.8 L19 337 L22.3 341 L26.5 335.6 V343.6 L22.3 346 L19 343 L15.3 345.6 Z M19 337 V343 M22.3 341 V346" fill="none" stroke="#c2c2c2" stroke-width="1" />
<path d="M13.5 358 V371.5 H28" fill="none" stroke="#444" stroke-width="1" shape-rendering="crispEdges"/>
<path d="M15.2 368.6 C21 368.6 25.5 365 26.6 358.2" fill="none" stroke="#ee7d22" stroke-width="1.4" />
<rect x="15.9" y="363.9" width="1.2" height="1.2" fill="#333" />
<rect x="18.4" y="364.9" width="1.2" height="1.2" fill="#333" />
<rect x="17.9" y="369.0" width="1.2" height="1.2" fill="#333" />
<rect x="22.7" y="360.9" width="1.2" height="1.2" fill="#333" />
<rect x="24.099999999999998" y="368.2" width="1.2" height="1.2" fill="#333" />
<rect x="27.4" y="358.9" width="1.2" height="1.2" fill="#333" />
<rect x="20.9" y="363.59999999999997" width="1.2" height="1.2" fill="#333" />
<path d="M13.5 382 V395.6 H28" fill="none" stroke="#c2c2c2" stroke-width="1" shape-rendering="crispEdges"/>
<path d="M21.4 388.8 L18.5 385.5 Q16.3 385 16.3 388.8 Q16.3 392.6 18.5 392 Z M21.4 388.8 L26.5 385.2 V392.5 Z" fill="none" stroke="#c2c2c2" stroke-width="1" />
<line x1="21.5" y1="383.5" x2="21.5" y2="394" stroke="#c2c2c2" stroke-width="1" shape-rendering="crispEdges"/>
<path d="M113.3 172.2 L146.5 175.5 L141.4 183.3 L172.3 203.4 L165.7 213.6 L134.8 193.5 L129.7 201.3 Z" fill="#fe0000" />
</svg>
<span class="t" style="left:41.14px;top:139.00px;font-size:13px;color:#363636;transform:scaleX(0.8506);">A<u>x</u>es</span>
<span class="t" style="left:41.13px;top:162.95px;font-size:13px;color:#363636;transform:scaleX(0.8857);"><u>A</u>xis Titles</span>
<span class="t" style="left:40.72px;top:186.90px;font-size:13px;color:#363636;transform:scaleX(0.9225);"><u>C</u>hart Title</span>
<span class="t" style="left:40.41px;top:210.85px;font-size:13px;color:#363636;transform:scaleX(0.8709);"><u>D</u>ata Labels</span>
<span class="t" style="left:40.38px;top:234.80px;font-size:13px;color:#b3b3b3;transform:scaleX(0.8989);">Data Ta<u>b</u>le</span>
<span class="t" style="left:40.43px;top:258.75px;font-size:13px;color:#363636;transform:scaleX(0.8503);"><u>E</u>rror Bars</span>
<span class="t" style="left:40.74px;top:282.70px;font-size:13px;color:#363636;transform:scaleX(0.9033);"><u>G</u>ridlines</span>
<span class="t" style="left:40.37px;top:306.65px;font-size:13px;color:#363636;transform:scaleX(0.9143);"><u>L</u>egend</span>
<span class="t" style="left:40.40px;top:330.60px;font-size:13px;color:#b3b3b3;transform:scaleX(0.8846);">L<u>i</u>nes</span>
<span class="t" style="left:41.09px;top:354.55px;font-size:13px;color:#363636;transform:scaleX(0.9134);"><u>T</u>rendline</span>
<span class="t" style="left:40.37px;top:378.50px;font-size:13px;color:#b3b3b3;transform:scaleX(0.9154);"><u>U</u>p/Down Bars</span>
</div>
</body></html>
